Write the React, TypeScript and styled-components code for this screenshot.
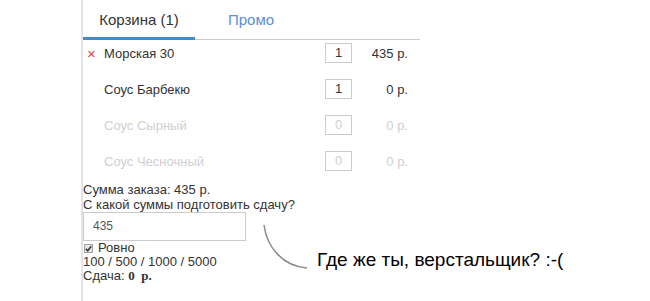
import React from "react";
import styled, {createGlobalStyle} from "styled-components";

interface CartItem {
    id: number
    name: string
    qty: number
    price: number
    removable?: boolean
}

const items: CartItem[] = [
    {id: 1, name: "Морская 30", qty: 1, price: 435, removable: true},
    {id: 2, name: "Соус Барбекю", qty: 1, price: 0},
    {id: 3, name: "Соус Сырный", qty: 0, price: 0},
    {id: 4, name: "Соус Чесночный", qty: 0, price: 0},
]

const App: React.FC = () => {
    const rows = items.map((item) => {
        const muted = item.qty === 0
        return (
            <Row key={item.id} muted={muted}>
                <Remove>{item.removable ? "×" : ""}</Remove>
                <Name>{item.name}</Name>
                <Qty muted={muted}>{item.qty}</Qty>
                <Price>{item.price} р.</Price>
            </Row>
        )
    })

    return (
        <Page>
            <GlobalStyle/>
            <Panel>
                <Tabs>
                    <Tab active>Корзина (1)</Tab>
                    <Tab>Промо</Tab>
                </Tabs>
                <Rows>{rows}</Rows>
                <Summary>
                    <Line>Сумма заказа: 435 р.</Line>
                    <Line>С какой суммы подготовить сдачу?</Line>
                    <ChangeInput>435</ChangeInput>
                    <CheckLine>
                        <CheckBox>
                            <svg width="7" height="7" viewBox="0 0 7 7">
                                <path d="M0.8 3.8 L2.7 5.7 L6.2 1.2" stroke="#333" strokeWidth="1.6" fill="none"/>
                            </svg>
                        </CheckBox>
                        Ровно
                    </CheckLine>
                    <Line tight>100 / 500 / 1000 / 5000</Line>
                    <Line tight>Сдача: <Amount>0&nbsp; р.</Amount></Line>
                </Summary>
            </Panel>
            <Note>
                <svg width="48" height="48" viewBox="0 0 48 48">
                    <path d="M1 1 C 4 24, 20 42, 44 44" stroke="#8a8a8a" strokeWidth="1.5" fill="none"/>
                </svg>
                <NoteText>Где же ты, верстальщик? :-(</NoteText>
            </Note>
        </Page>
    )
}

interface MutedProps {
    muted?: boolean
}

interface TabProps {
    active?: boolean
}

interface LineProps {
    tight?: boolean
}

const GlobalStyle = createGlobalStyle`
  body {
    margin: 0;
    background: #fff;
    font-family: "Liberation Sans", Arial, sans-serif;
    color: #333;
  }
`

const Page = styled.div`
    position: relative;
    width: 650px;
    height: 301px;
    padding-left: 81px;
    box-sizing: border-box;
    overflow: hidden;
`

const Panel = styled.div`
    width: 339px;
    height: 301px;
    border-left: 2px solid #e4e4e4;
    box-sizing: border-box;
`

const Tabs = styled.div`
    display: flex;
    height: 40px;
    border-bottom: 1px solid #ccc;
    box-sizing: border-box;
`

const Tab = styled.div<TabProps>`
    width: 112px;
    padding-top: 11px;
    text-align: center;
    font-size: 15px;
    color: ${(props) => props.active ? '#333' : '#5b8fd8'};
    border-bottom: 3px solid ${(props) => props.active ? '#428bca' : 'transparent'};
    margin-bottom: -1px;
`

const Rows = styled.div`
    display: flex;
    flex-direction: column;
    gap: 16px;
    padding-top: 3px;
`

const Row = styled.div<MutedProps>`
    display: grid;
    grid-template-columns: 21px 1fr 27px 56px;
    align-items: center;
    height: 20px;
    padding-right: 12px;
    font-size: 13px;
    color: ${(props) => props.muted ? '#cfcfcf' : '#333'};
`

const Remove = styled.span`
    color: #e0443c;
    font-size: 15px;
    padding-left: 4px;
`

const Name = styled.span``

const Qty = styled.span<MutedProps>`
    height: 20px;
    line-height: 18px;
    border: 1px solid #ccc;
    box-sizing: border-box;
    text-align: center;
    color: ${(props) => props.muted ? '#cfcfcf' : '#333'};
`

const Price = styled.span`
    text-align: right;
`

const Summary = styled.div`
    display: flex;
    flex-direction: column;
    align-items: flex-start;
    padding-top: 11px;
    font-size: 13px;
`

const Line = styled.div<LineProps>`
    line-height: ${(props) => props.tight ? '14px' : '15px'};
    white-space: nowrap;
`

const ChangeInput = styled.div`
    width: 163px;
    height: 29px;
    padding-left: 9px;
    border: 1px solid #ccc;
    box-sizing: border-box;
    line-height: 27px;
    font-size: 12px;
    color: #555;
`

const CheckLine = styled.div`
    display: flex;
    align-items: center;
    gap: 5px;
    line-height: 14px;
`

const CheckBox = styled.span`
    display: flex;
    align-items: center;
    justify-content: center;
    width: 9px;
    height: 9px;
    margin-left: 1px;
    border: 1px solid #a0a0a0;
    background: #e8e8e8;
    box-sizing: border-box;
`

const Amount = styled.b`
    font-family: "Liberation Serif", "Times New Roman", serif;
`

const Note = styled.div`
    position: absolute;
    left: 263px;
    top: 224px;
    display: flex;
    align-items: flex-end;
    gap: 6px;
`

const NoteText = styled.span`
    font-size: 19px;
    color: #000;
    margin-bottom: 1px;
    white-space: nowrap;
`

export default App;
